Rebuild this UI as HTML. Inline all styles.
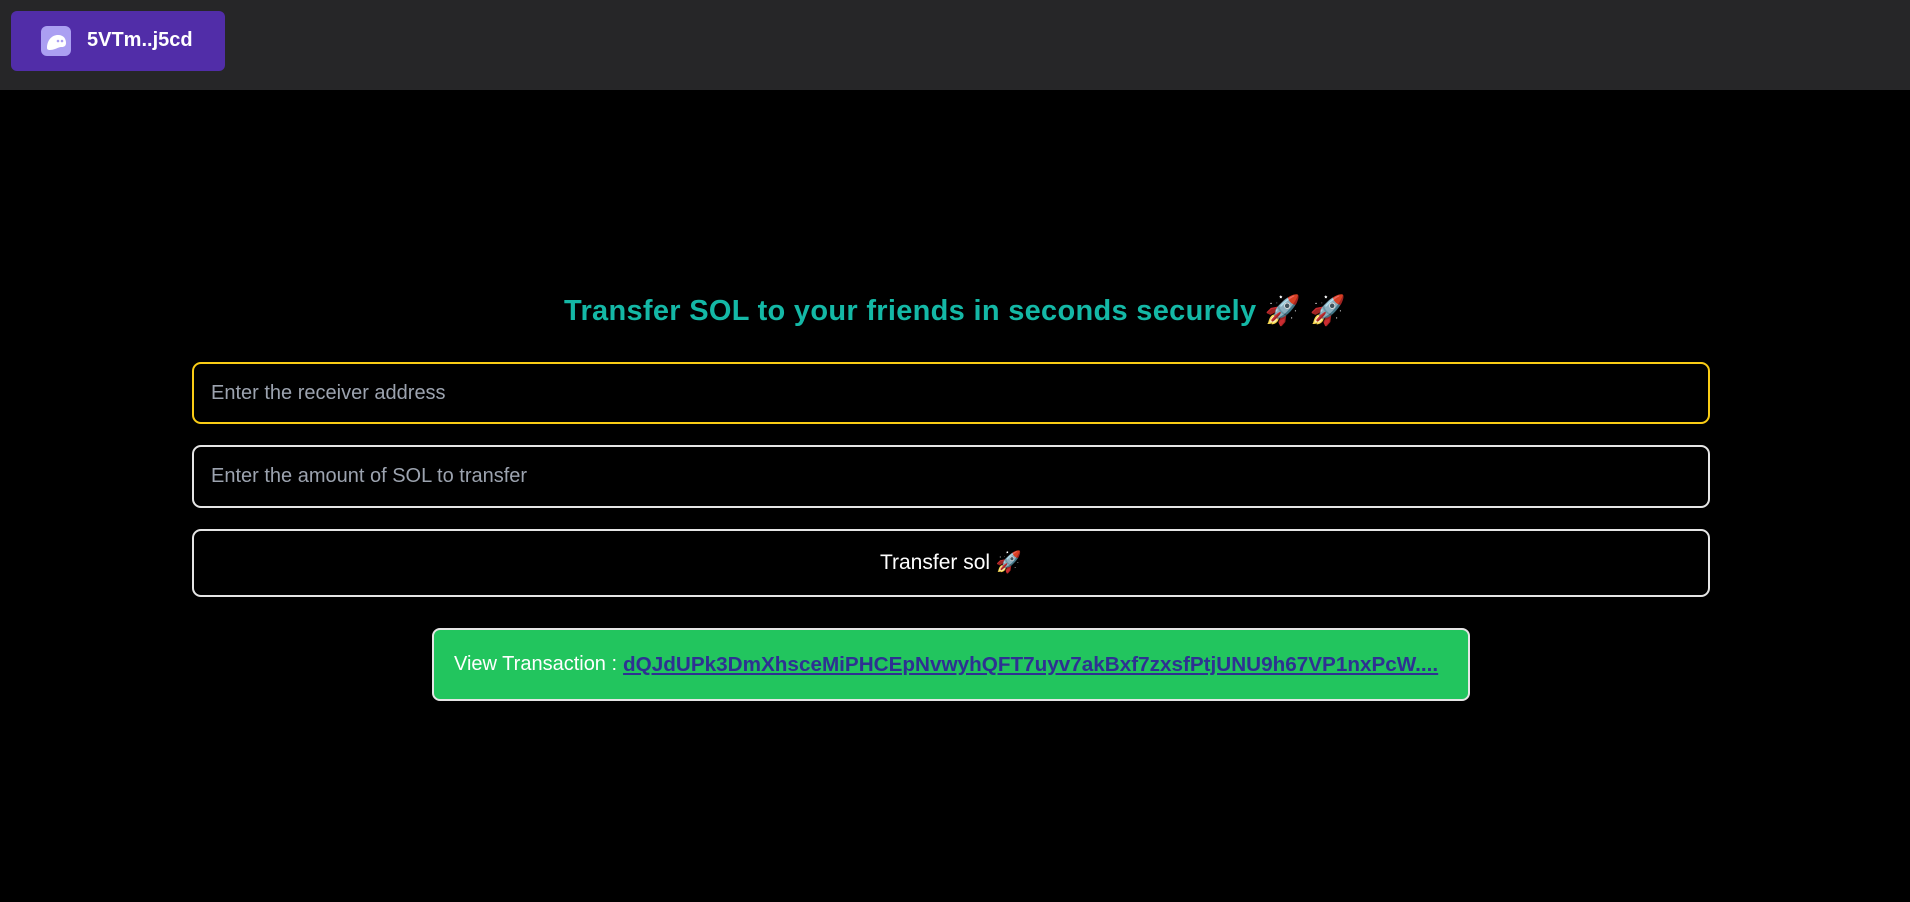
<!DOCTYPE html>
<html><head><meta charset="utf-8"><style>
*{margin:0;padding:0;box-sizing:border-box}
body{width:1910px;height:902px;background:#000;font-family:"Liberation Sans",sans-serif;position:relative;overflow:hidden}
.hdr{position:absolute;left:0;top:0;width:1910px;height:90px;background:#262628}
.wb{position:absolute;left:11px;top:11px;width:214px;height:60px;background:#512da8;border-radius:6px;color:#fff;font-weight:bold;font-size:20px}
.ic{position:absolute;left:30px;top:15px;width:30px;height:30px;background:#ab9ff2;border-radius:6px}
.wb span{position:absolute;left:76px;top:18px}
h1{position:absolute;left:0;width:1910px;top:294px;text-align:center;color:#14b8a6;font-size:29px;font-weight:bold;letter-spacing:0.3px}
.in{position:absolute;left:192px;width:1518px;border:2px solid #e5e5e5;border-radius:9px;color:#9ca3af;font-size:20px;padding-left:17px;display:flex;align-items:center}
.btn{justify-content:center;color:#fff;padding:0;font-size:21px}
.tx{position:absolute;left:432px;top:628px;width:1038px;height:73px;background:#22c55e;border:2px solid #e5e5e5;border-radius:8px;color:#fff;font-size:20px;padding-left:20px;display:flex;align-items:center;white-space:nowrap}
.tx a{color:#2e3192;font-weight:bold;text-decoration:underline;margin-left:6px;font-size:20.7px}
</style></head><body>
<div class="hdr"><div class="wb"><div class="ic"><svg width="30" height="30" viewBox="0 0 30 30"><path d="M6 22c0-8 5-13 11-13s8 4 8 8c0 3-2 4-4 4-3 0-4 1-7 2-3 1-8 2-8-1z" fill="#fff"/><circle cx="17" cy="15" r="1.3" fill="#ab9ff2"/><circle cx="21" cy="15" r="1.3" fill="#ab9ff2"/></svg></div><span>5VTm..j5cd</span></div></div>
<h1>Transfer SOL to your friends in seconds securely 🚀 🚀</h1>
<div class="in" style="top:362px;height:62px;border-color:#facc15">Enter the receiver address</div>
<div class="in" style="top:445px;height:63px">Enter the amount of SOL to transfer</div>
<div class="in btn" style="top:529px;height:68px">Transfer sol 🚀</div>
<div class="tx">View Transaction : <a>dQJdUPk3DmXhsceMiPHCEpNvwyhQFT7uyv7akBxf7zxsfPtjUNU9h67VP1nxPcW....</a></div>
</body></html>
